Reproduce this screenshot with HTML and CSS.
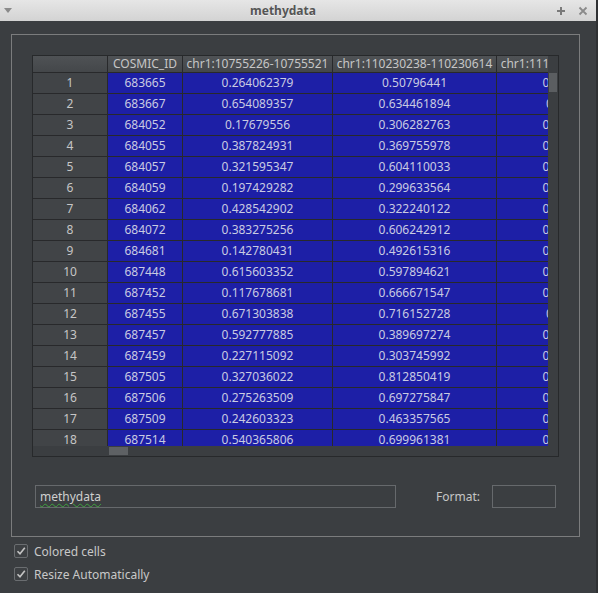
FILE: index.html
```html
<!DOCTYPE html>
<html>
<head>
<meta charset="utf-8">
<link rel="stylesheet" href="styles.css">
</head>
<body>
<div class="window">
  <div class="titlebar">
    <svg class="tb-menu" width="8" height="6" viewBox="0 0 8 6"><path d="M0 0 L8 0 L4 5 Z" fill="#8a8a8a"/></svg>
    <div class="title">methydata</div>
    <div class="tb-buttons">
      <svg width="10" height="10" viewBox="0 0 10 10"><path d="M5 1 V9 M1 5 H9" stroke="#7a7a7a" stroke-width="2"/></svg>
      <svg width="10" height="10" viewBox="0 0 10 10"><path d="M1.5 1.5 L8.5 8.5 M8.5 1.5 L1.5 8.5" stroke="#8a8a8a" stroke-width="1.8"/></svg>
    </div>
  </div>
  <div class="content">
    <div class="group">
      <div class="table-frame">
        <div class="viewport">
          <div class="grid">
            <div class="hd corner-hd"></div><div class="hd">COSMIC_ID</div><div class="hd">chr1:10755226-10755521</div><div class="hd">chr1:110230238-110230614</div><div class="hd">chr1:111217438-111217755</div>
            <div class="rh">1</div><div class="c">683665</div><div class="c">0.264062379</div><div class="c">0.50796441</div><div class="c">0.435617291</div>
            <div class="rh">2</div><div class="c">683667</div><div class="c">0.654089357</div><div class="c">0.634461894</div><div class="c">0.61823415</div>
            <div class="rh">3</div><div class="c">684052</div><div class="c">0.17679556</div><div class="c">0.306282763</div><div class="c">0.292841653</div>
            <div class="rh">4</div><div class="c">684055</div><div class="c">0.387824931</div><div class="c">0.369755978</div><div class="c">0.418326507</div>
            <div class="rh">5</div><div class="c">684057</div><div class="c">0.321595347</div><div class="c">0.604110033</div><div class="c">0.537219846</div>
            <div class="rh">6</div><div class="c">684059</div><div class="c">0.197429282</div><div class="c">0.299633564</div><div class="c">0.341185923</div>
            <div class="rh">7</div><div class="c">684062</div><div class="c">0.428542902</div><div class="c">0.322240122</div><div class="c">0.503962718</div>
            <div class="rh">8</div><div class="c">684072</div><div class="c">0.383275256</div><div class="c">0.606242912</div><div class="c">0.472650138</div>
            <div class="rh">9</div><div class="c">684681</div><div class="c">0.142780431</div><div class="c">0.492615316</div><div class="c">0.286014527</div>
            <div class="rh">10</div><div class="c">687448</div><div class="c">0.615603352</div><div class="c">0.597894621</div><div class="c">0.563728904</div>
            <div class="rh">11</div><div class="c">687452</div><div class="c">0.117678681</div><div class="c">0.666671547</div><div class="c">0.391527806</div>
            <div class="rh">12</div><div class="c">687455</div><div class="c">0.671303838</div><div class="c">0.716152728</div><div class="c">0.70215384</div>
            <div class="rh">13</div><div class="c">687457</div><div class="c">0.592777885</div><div class="c">0.389697274</div><div class="c">0.448102635</div>
            <div class="rh">14</div><div class="c">687459</div><div class="c">0.227115092</div><div class="c">0.303745992</div><div class="c">0.317586420</div>
            <div class="rh">15</div><div class="c">687505</div><div class="c">0.327036022</div><div class="c">0.812850419</div><div class="c">0.659243107</div>
            <div class="rh">16</div><div class="c">687506</div><div class="c">0.275263509</div><div class="c">0.697275847</div><div class="c">0.524871936</div>
            <div class="rh">17</div><div class="c">687509</div><div class="c">0.242603323</div><div class="c">0.463357565</div><div class="c">0.376104258</div>
            <div class="rh">18</div><div class="c">687514</div><div class="c">0.540365806</div><div class="c">0.699961381</div><div class="c">0.582937614</div>
          </div>
        </div>
        <div class="vscroll"><div class="vhandle"></div></div>
        <div class="hscroll"><div class="hhandle"></div></div>
        <div class="sb-corner"></div>
      </div>
      <div class="name-row">
        <div class="line-edit"><span class="spell">methydata</span></div>
        <div class="format-label">Format:</div>
        <div class="format-box"></div>
      </div>
    </div>
    <div class="checks">
      <div class="check-row">
        <span class="box"><svg width="12" height="12" viewBox="0 0 12 12"><path d="M2.5 6.2 L5 8.8 L9.8 2.8" fill="none" stroke="#c4c4c4" stroke-width="1.6"/></svg></span>
        <span class="check-label">Colored cells</span>
      </div>
      <div class="check-row">
        <span class="box"><svg width="12" height="12" viewBox="0 0 12 12"><path d="M2.5 6.2 L5 8.8 L9.8 2.8" fill="none" stroke="#c4c4c4" stroke-width="1.6"/></svg></span>
        <span class="check-label">Resize Automatically</span>
      </div>
    </div>
  </div>
</div>
</body>
</html>
```
FILE: styles.css
```css
* { box-sizing: border-box; }
html, body {
  margin: 0;
  padding: 0;
  background: #2f3133;
  width: 598px;
  height: 593px;
  overflow: hidden;
  font-family: "Noto Sans", "DejaVu Sans", sans-serif;
  font-size: 12px;
  color: #c8c8c8;
}
.window {
  width: 596px;
  height: 593px;
  background: #3b3e41;
  display: flex;
  flex-direction: column;
}
.titlebar {
  height: 21px;
  flex: none;
  background: linear-gradient(#e6e6e6, #d3d3d3);
  display: flex;
  align-items: center;
  padding: 0 8px 0 4px;
}
.tb-menu { flex: none; margin-top: 1px; }
.title {
  flex: 1;
  text-align: center;
  font-weight: bold;
  font-size: 12px;
  color: #555555;
  padding-right: 2px;
  text-shadow: 0 1px 0 rgba(255,255,255,0.6);
}
.tb-buttons {
  display: flex;
  gap: 12px;
  align-items: center;
}
.content {
  flex: 1;
  padding: 13px 0 0 11px;
}
.group {
  width: 569px;
  height: 503px;
  border: 1px solid #7b7c7d;
  padding: 20px 0 0 20px;
}
.table-frame {
  width: 527px;
  height: 402px;
  border: 1px solid #27292b;
  display: grid;
  grid-template-columns: 515px 10px;
  grid-template-rows: 390px 10px;
  background: #3b3e41;
}
.viewport {
  overflow: hidden;
  position: relative;
}
.grid {
  display: grid;
  grid-template-columns: 75px 75px 150px 164px 164px;
  grid-auto-rows: 21px;
  grid-template-rows: 17px;
  width: 628px;
}
.grid > div {
  border-right: 1px solid #28292b;
  border-bottom: 1px solid #28292b;
  text-align: center;
  white-space: nowrap;
  overflow: hidden;
}
.hd {
  background: linear-gradient(#4f5255, #44474a);
  line-height: 16px;
  color: #c6c6c6;
}
.rh {
  background: #414447;
  line-height: 20px;
  color: #c6c6c6;
}
.c {
  background: #1d1fa6;
  line-height: 20px;
  color: #c9cbe2;
}
.vscroll {
  background: #3b3e41;
  padding: 17px 1px 0 1px;
}
.vhandle {
  height: 19px;
  background: #5b5e61;
}
.hscroll {
  background: #3b3e41;
  padding: 1px 0 1px 76px;
}
.hhandle {
  width: 19px;
  height: 8px;
  background: #5e6164;
}
.sb-corner { background: #3b3e41; }
.name-row {
  display: flex;
  align-items: center;
  margin-top: 28px;
  height: 23px;
}
.line-edit {
  width: 361px;
  height: 23px;
  margin-left: 3px;
  border: 1px solid #66696c;
  padding-left: 4px;
  line-height: 21px;
  color: #cfcfcf;
}
.spell {
  text-decoration: underline wavy #3fa23f;
  text-decoration-thickness: 1px;
  text-underline-offset: 2px;
}
.format-label {
  margin-left: 40px;
  color: #c6c6c6;
}
.format-box {
  margin-left: 12px;
  width: 64px;
  height: 23px;
  border: 1px solid #66696c;
}
.checks {
  padding: 7px 0 0 3px;
  display: flex;
  flex-direction: column;
  gap: 9px;
}
.check-row {
  display: flex;
  align-items: center;
  height: 14px;
}
.box {
  width: 14px;
  height: 14px;
  border: 1px solid #6a6d70;
  border-radius: 2px;
  display: flex;
  align-items: center;
  justify-content: center;
  background: #3d4043;
}
.check-label {
  margin-left: 6px;
  color: #c8c8c8;
}
```
